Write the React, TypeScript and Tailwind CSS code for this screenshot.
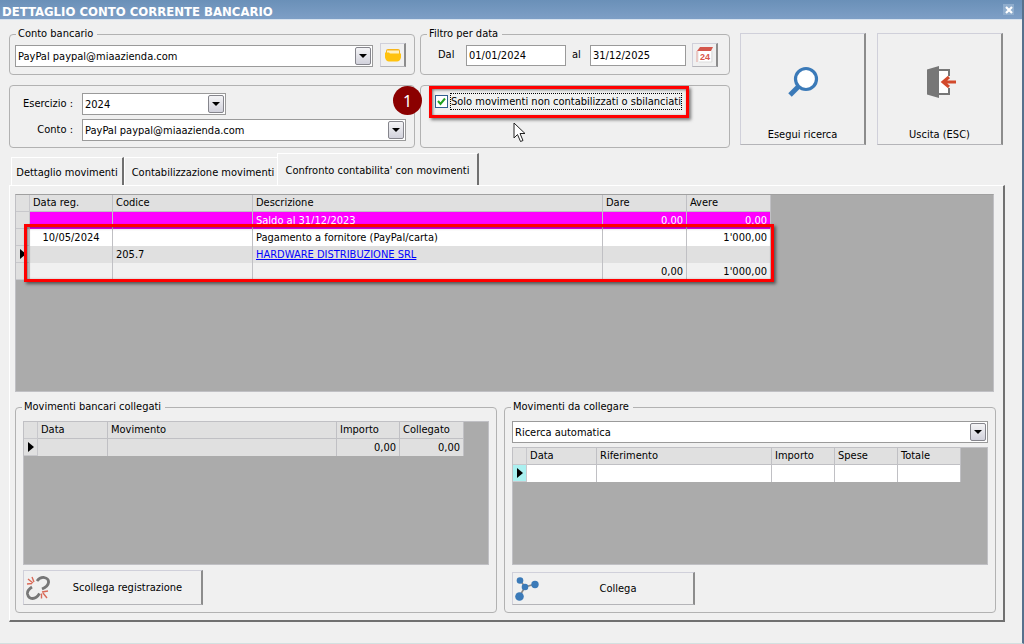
import React from 'react'
import { clsx } from 'clsx'

interface Column {
  id: string
  label: string
  width: number
  align?: 'left' | 'center' | 'right'
}

interface Row {
  id: string
  cells: string[]
  className: string
  current?: boolean
  link?: boolean
}

interface DataGridProps {
  label: string
  columns: Column[]
  rows: Row[]
  markerClassName?: string
}

const movementColumns: Column[] = [
  { id: 'data', label: 'Data reg.', width: 83, align: 'center' },
  { id: 'codice', label: 'Codice', width: 140 },
  { id: 'descrizione', label: 'Descrizione', width: 350 },
  { id: 'dare', label: 'Dare', width: 84, align: 'right' },
  { id: 'avere', label: 'Avere', width: 84, align: 'right' },
]

const movementRows: Row[] = [
  {
    id: 'saldo',
    cells: ['', '', 'Saldo al 31/12/2023', '0.00', '0.00'],
    className: 'bg-[#ff00ff] text-white',
  },
  {
    id: 'pagamento',
    cells: ['10/05/2024', '', 'Pagamento a fornitore (PayPal/carta)', '', "1'000,00"],
    className: 'bg-white',
  },
  {
    id: 'fornitore',
    cells: ['', '205.7', 'HARDWARE DISTRIBUZIONE SRL', '', ''],
    className: 'bg-[#e0e0e0]',
    current: true,
    link: true,
  },
  {
    id: 'totale',
    cells: ['', '', '', '0,00', "1'000,00"],
    className: 'bg-[#f0f0f0]',
  },
]

const linkedColumns: Column[] = [
  { id: 'data', label: 'Data', width: 70 },
  { id: 'movimento', label: 'Movimento', width: 229 },
  { id: 'importo', label: 'Importo', width: 63, align: 'right' },
  { id: 'collegato', label: 'Collegato', width: 64, align: 'right' },
]

const linkedRows: Row[] = [
  { id: 'vuoto', cells: ['', '', '0,00', '0,00'], className: 'bg-[#e0e0e0]', current: true },
]

const pendingColumns: Column[] = [
  { id: 'data', label: 'Data', width: 70 },
  { id: 'riferimento', label: 'Riferimento', width: 175 },
  { id: 'importo', label: 'Importo', width: 63, align: 'right' },
  { id: 'spese', label: 'Spese', width: 63, align: 'right' },
  { id: 'totale', label: 'Totale', width: 63, align: 'right' },
]

const pendingRows: Row[] = [
  { id: 'vuoto', cells: ['', '', '', '', ''], className: 'bg-white', current: true },
]

const DataGrid: React.FC<DataGridProps> = ({ label, columns, rows, markerClassName = 'bg-[#e0e0e0]' }) => {
  const total = columns.reduce((sum, col) => sum + col.width, 14)

  return (
    <table
      aria-label={label}
      className="table-fixed border-separate border-spacing-0"
      style={{ width: total }}
    >
      <colgroup>
        <col style={{ width: 14 }} />
        {columns.map((col) => (
          <col key={col.id} style={{ width: col.width }} />
        ))}
      </colgroup>
      <thead>
        <tr className="h-[17px] bg-[#e0e0e0]">
          <td className="border-r border-b border-[#c8c8cc] p-0" />
          {columns.map((col) => (
            <th
              key={col.id}
              scope="col"
              className="border-r border-b border-[#c0c0c4] p-0 pl-[3px] text-left font-normal leading-4"
            >
              {col.label}
            </th>
          ))}
        </tr>
      </thead>
      <tbody>
        {rows.map((row) => (
          <tr key={row.id} className={clsx('h-[17px]', row.className)}>
            <td className={clsx('border-r border-b border-[#c8c8cc] p-0', markerClassName)}>
              {row.current && (
                <svg viewBox="0 0 6 10" className="ml-1 h-[10px] w-[6px]" aria-hidden="true">
                  <path d="M0 0v10l6-5z" fill="#000" />
                </svg>
              )}
            </td>
            {row.cells.map((cell, i) => (
              <td
                key={columns[i].id}
                className={clsx(
                  'whitespace-nowrap border-r border-[#c0c0c4] p-0 px-[3px] leading-4',
                  columns[i].align === 'right' && 'text-right',
                  columns[i].align === 'center' && 'text-center'
                )}
              >
                {row.link && i === 2 ? (
                  <a href="#fornitore" className="text-[#0000ff] underline">
                    {cell}
                  </a>
                ) : (
                  cell
                )}
              </td>
            ))}
          </tr>
        ))}
      </tbody>
    </table>
  )
}

interface ComboProps {
  id: string
  value: string
  label?: string
  className?: string
}

const Combo: React.FC<ComboProps> = ({ id, value, label, className }) => (
  <div className={clsx('relative h-[22px]', className)}>
    <select
      id={id}
      aria-label={label}
      defaultValue={value}
      className="h-full w-full appearance-none border border-[#9a9a9a] bg-white pt-0.5 pr-6 pl-0.5 outline-none"
    >
      <option>{value}</option>
    </select>
    <span className="pointer-events-none absolute inset-y-0.5 right-0.5 flex w-4 items-center justify-center rounded-xs border border-[#85858c] bg-linear-to-b from-[#f4f4f6] to-[#d2d2dc]">
      <svg viewBox="0 0 8 4" className="h-1 w-2" aria-hidden="true">
        <path d="M0 0h8L4 4z" fill="#000" />
      </svg>
    </span>
  </div>
)

interface GroupProps {
  title?: string
  className?: string
  bodyClassName?: string
  children?: React.ReactNode
}

const Group: React.FC<GroupProps> = ({ title, className, bodyClassName, children }) => (
  <fieldset className={clsx('min-w-0 rounded border border-[#b2b2b2]', className)}>
    {title && <legend className="ml-1.5 pr-1 pl-0.5 leading-[14px]">{title}</legend>}
    <div className={bodyClassName}>{children}</div>
  </fieldset>
)

const raised = 'border border-r-2 border-[#d0d0da] border-r-[#8c8c8c] border-b-[#b4b4b8] bg-[#f0f0f0]'
const callout = 'pointer-events-none absolute border-3 border-[#ff0000] shadow-[2px_2px_3px_rgba(0,0,0,0.5),inset_1px_1px_3px_rgba(0,0,0,0.5)]'

const SearchIcon = () => (
  <svg viewBox="0 0 32 32" className="h-8 w-8" aria-hidden="true">
    <path d="M13 19 3 29" stroke="#3b7ab8" strokeWidth="5" />
    <circle cx="19" cy="13" r="10.5" fill="#fff" stroke="#3b7ab8" strokeWidth="3.2" />
  </svg>
)

const ExitIcon = () => (
  <svg viewBox="0 0 32 32" className="h-8 w-8" aria-hidden="true">
    <path d="M14 3h11v26H14z" fill="#fff" />
    <path d="M15 4h10v6M25 22v6H15" fill="none" stroke="#777" strokeWidth="2" />
    <path d="M3 3.500 15 0v32L3 28.500z" fill="#777" />
    <path d="M32 16H19M25 11l-6 5 6 5" fill="none" stroke="#d24a2c" strokeWidth="3" />
  </svg>
)

const FolderIcon = () => (
  <svg viewBox="0 0 16 14" className="h-[14px] w-4" aria-hidden="true">
    <path d="M1 3q0-2 2-2h10q2 0 2 2v4H1z" fill="#f7b51c" />
    <path d="M2 2.500h12V6H2z" fill="#fff1c4" />
    <path d="M0 4.500h4l1 1h11v4q-1 4-4 4H4q-3 0-4-4z" fill="#ffc20e" />
  </svg>
)

const CalendarIcon = () => (
  <svg viewBox="0 0 18 16" className="h-4 w-[18px]" aria-hidden="true">
    <path d="M3 4h12v11H3z" fill="#fff" />
    <path d="M1 4 4 0h13l-2 4z" fill="#d4574c" />
    <path d="M1 4v11" stroke="#e3a49c" strokeWidth="1" />
    <path d="M16 4v11H3" stroke="#dcdcdc" fill="none" />
    <text x="4" y="13" fontSize="9" fontWeight="bold" fill="#d9574c" fontFamily="Liberation Sans">
      24
    </text>
  </svg>
)

const BrokenLinkIcon = () => (
  <svg viewBox="0 0 24 24" className="h-6 w-6" fill="none" aria-hidden="true">
    <path d="M11 5q3-4 7-3.500 5 1 4.500 5-.5 4-6.500 6.500" stroke="#777" strokeWidth="2.800" />
    <path d="M6 11q-5 3-4.500 7 1 4.500 5 4.500 4 0 7-5" stroke="#777" strokeWidth="2.800" />
    <path d="m2 3 5 4M6 1l2 5M1 8l5-.5M16 16l6-1M17 17l4 5M15.500 17.500v5" stroke="#d96a58" strokeWidth="1.400" />
  </svg>
)

const NetworkIcon = () => (
  <svg viewBox="0 0 24 24" className="h-6 w-6" aria-hidden="true">
    <path d="m5 3 5 7 10-3M10 10 4 20" stroke="#888" strokeWidth="1.6" fill="none" />
    <circle cx="5" cy="3.500" r="3.300" fill="#3b7ab8" />
    <circle cx="10" cy="10" r="3.300" fill="#3b7ab8" />
    <circle cx="20" cy="7.500" r="3.700" fill="#3b7ab8" />
    <circle cx="4.500" cy="19.500" r="4.300" fill="#3b7ab8" />
  </svg>
)

const App: React.FC = () => {
  return (
    <div className="flex min-h-screen flex-col border-r-2 border-b border-r-[#56718d] border-b-[#d3e0e0] bg-[#f0f0f0] font-['DejaVu_Sans_Condensed','Noto_Sans',sans-serif] text-[11px] leading-[14px] text-black">
      {/* Title bar */}
      <header className="flex h-5 items-center justify-between border-b border-[#d7e2ee] bg-linear-to-b from-[#6a90b8] to-[#7e9fc6] pr-2 pl-0.5">
        <h1 className="pt-1 text-[13px] font-bold text-white">DETTAGLIO CONTO CORRENTE BANCARIO</h1>
        <button type="button" aria-label="Chiudi" className="flex h-[11px] w-[11px] items-center justify-center bg-[#8fadcd]">
          <svg viewBox="0 0 8 8" className="h-2 w-2" aria-hidden="true">
            <path d="m1 1 6 6M7 1 1 7" stroke="#fff" strokeWidth="2.2" />
          </svg>
        </button>
      </header>

      <main className="flex flex-1 flex-col pt-[7px] pr-[17px] pb-[21px] pl-[9px]">
        {/* Filters */}
        <section className="flex gap-[10px] pr-0.5">
          <div className="flex flex-[721] gap-[5px]">
            <div className="flex flex-[406] flex-col gap-[10px]">
              <Group
                title="Conto bancario"
                className="h-12"
                bodyClassName="flex items-end gap-[7px] pt-0.5 pr-2 pl-[5px]"
              >
                <Combo id="banca" label="Conto bancario" value="PayPal paypal@miaazienda.com" className="flex-1" />
                <button type="button" aria-label="Apri conto" className={clsx('flex h-6 w-[26px] items-center justify-center', raised)}>
                  <FolderIcon />
                </button>
              </Group>
              <Group
                className="h-[63px]"
                bodyClassName="grid grid-cols-[63px_1fr] items-center gap-x-[9px] gap-y-1 pt-[7px] pr-2"
              >
                <label htmlFor="esercizio" className="text-right">Esercizio :</label>
                <Combo id="esercizio" value="2024" className="w-36" />
                <label htmlFor="conto" className="text-right">Conto :</label>
                <Combo id="conto" value="PayPal paypal@miaazienda.com" />
              </Group>
            </div>

            <div className="flex flex-[310] flex-col gap-[10px]">
              <Group title="Filtro per data" className="h-12" bodyClassName="flex items-center pt-0.5 pl-[17px]">
                <label htmlFor="dal" className="w-7">Dal</label>
                <input id="dal" defaultValue="01/01/2024" className="h-[21px] w-[100px] border border-[#9a9a9a] bg-white px-0.5 outline-none" />
                <label htmlFor="al" className="w-6 pl-1.5">al</label>
                <input id="al" defaultValue="31/12/2025" className="h-[21px] w-24 border border-[#9a9a9a] bg-white px-0.5 outline-none" />
                <button type="button" aria-label="Calendario" className={clsx('ml-1.5 flex h-6 w-[26px] items-center justify-center', raised)}>
                  <CalendarIcon />
                </button>
              </Group>
              <Group className="relative h-[63px]" bodyClassName="pt-[7px] pl-3.5">
                <label className="flex w-max items-center gap-0.5">
                  <span className="relative flex h-[13px] w-[13px]">
                    <input type="checkbox" defaultChecked className="peer h-[13px] w-[13px] appearance-none border border-[#2f5f8f] bg-white" />
                    <svg viewBox="0 0 13 13" className="pointer-events-none absolute inset-0 hidden h-[13px] w-[13px] peer-checked:block" aria-hidden="true">
                      <path d="m3 6 2.5 3L10 3.500" fill="none" stroke="#21a121" strokeWidth="2" />
                    </svg>
                  </span>
                  <span className="border border-dotted border-black leading-[15px]">Solo movimenti non contabilizzati o sbilanciati</span>
                </label>
                <span className={clsx(callout, 'top-0 left-2 h-8 w-[260px]')} />
                <span className="absolute top-0 -left-7 flex h-[29px] w-[29px] items-center justify-center rounded-full bg-[#8b0000] font-['Noto_Sans'] text-[16px] text-white">
                  1
                </span>
                <svg viewBox="0 0 13 21" className="absolute top-9 left-23 h-[21px] w-[13px]" aria-hidden="true">
                  <path d="M1 1v15l3.500-3.500 3 7 2.500-1-3-7H12z" fill="#fff" stroke="#222" strokeWidth="1" />
                </svg>
              </Group>
            </div>
          </div>

          <div className="flex flex-[263] gap-[11px] pt-1.5">
            <button type="button" className={clsx('flex h-[112px] flex-1 flex-col items-center justify-between pt-8 pb-0.5', raised)}>
              <SearchIcon />
              <span>Esegui ricerca</span>
            </button>
            <button type="button" className={clsx('flex h-[112px] flex-1 flex-col items-center justify-between pt-8 pb-0.5', raised)}>
              <ExitIcon />
              <span>Uscita (ESC)</span>
            </button>
          </div>
        </section>

        {/* Tabs */}
        <div role="tablist" className="mt-[5px] flex h-8 items-end pl-0.5">
          <button type="button" role="tab" aria-selected="false" className="h-7 w-[113px] whitespace-nowrap border-t border-l border-r-2 border-white border-r-[#707070] pt-0.5">
            Dettaglio movimenti
          </button>
          <button type="button" role="tab" aria-selected="false" className="h-7 w-[153px] whitespace-nowrap border-t border-l border-white pt-0.5 pl-1">
            Contabilizzazione movimenti
          </button>
          <button type="button" role="tab" aria-selected="true" className="h-8 w-[202px] whitespace-nowrap border-t border-l border-r-2 border-white border-r-[#707070] pt-0.5">
            Confronto contabilita' con movimenti
          </button>
        </div>

        <section role="tabpanel" className="flex flex-1 flex-col border-t border-r-2 border-b-2 border-l border-white border-r-[#707070] border-b-[#707070] pt-2 pr-[7px] pb-[7px] pl-[5px]">
          <div className="relative mr-0.5 h-[198px] border border-[#c0c0c4] border-t-[#a0a0a0] bg-[#ababab]">
            <DataGrid label="Movimenti contabili" columns={movementColumns} rows={movementRows} />
            <span className={clsx(callout, 'top-[29px] left-2 h-[58px] w-[750px]')} />
          </div>

          <div className="mt-2 flex flex-1 gap-[7px]">
            <Group title="Movimenti bancari collegati" className="flex-[482]" bodyClassName="px-[7px] pt-[7px]">
              <div className="h-[144px] border border-[#c0c0c4] bg-[#ababab]">
                <DataGrid label="Movimenti bancari collegati" columns={linkedColumns} rows={linkedRows} />
              </div>
              <button type="button" className={clsx('mt-[5px] flex h-[35px] w-[180px] items-center pl-0.5', raised)}>
                <BrokenLinkIcon />
                <span className="flex-1 pl-1 text-center">Scollega registrazione</span>
              </button>
            </Group>

            <Group title="Movimenti da collegare" className="flex-[492]" bodyClassName="px-[7px] pt-[7px]">
              <Combo id="ricerca" label="Tipo di ricerca" value="Ricerca automatica" />
              <div className="mt-1 h-[118px] border border-[#c0c0c4] bg-[#ababab]">
                <DataGrid label="Movimenti da collegare" columns={pendingColumns} rows={pendingRows} markerClassName="bg-[#aaf0f0]" />
              </div>
              <button type="button" className={clsx('mt-[7px] flex h-[33px] w-[183px] items-center pl-0.5', raised)}>
                <NetworkIcon />
                <span className="flex-1 pl-1 text-center">Collega</span>
              </button>
            </Group>
          </div>
        </section>
      </main>
    </div>
  )
}

export default App
